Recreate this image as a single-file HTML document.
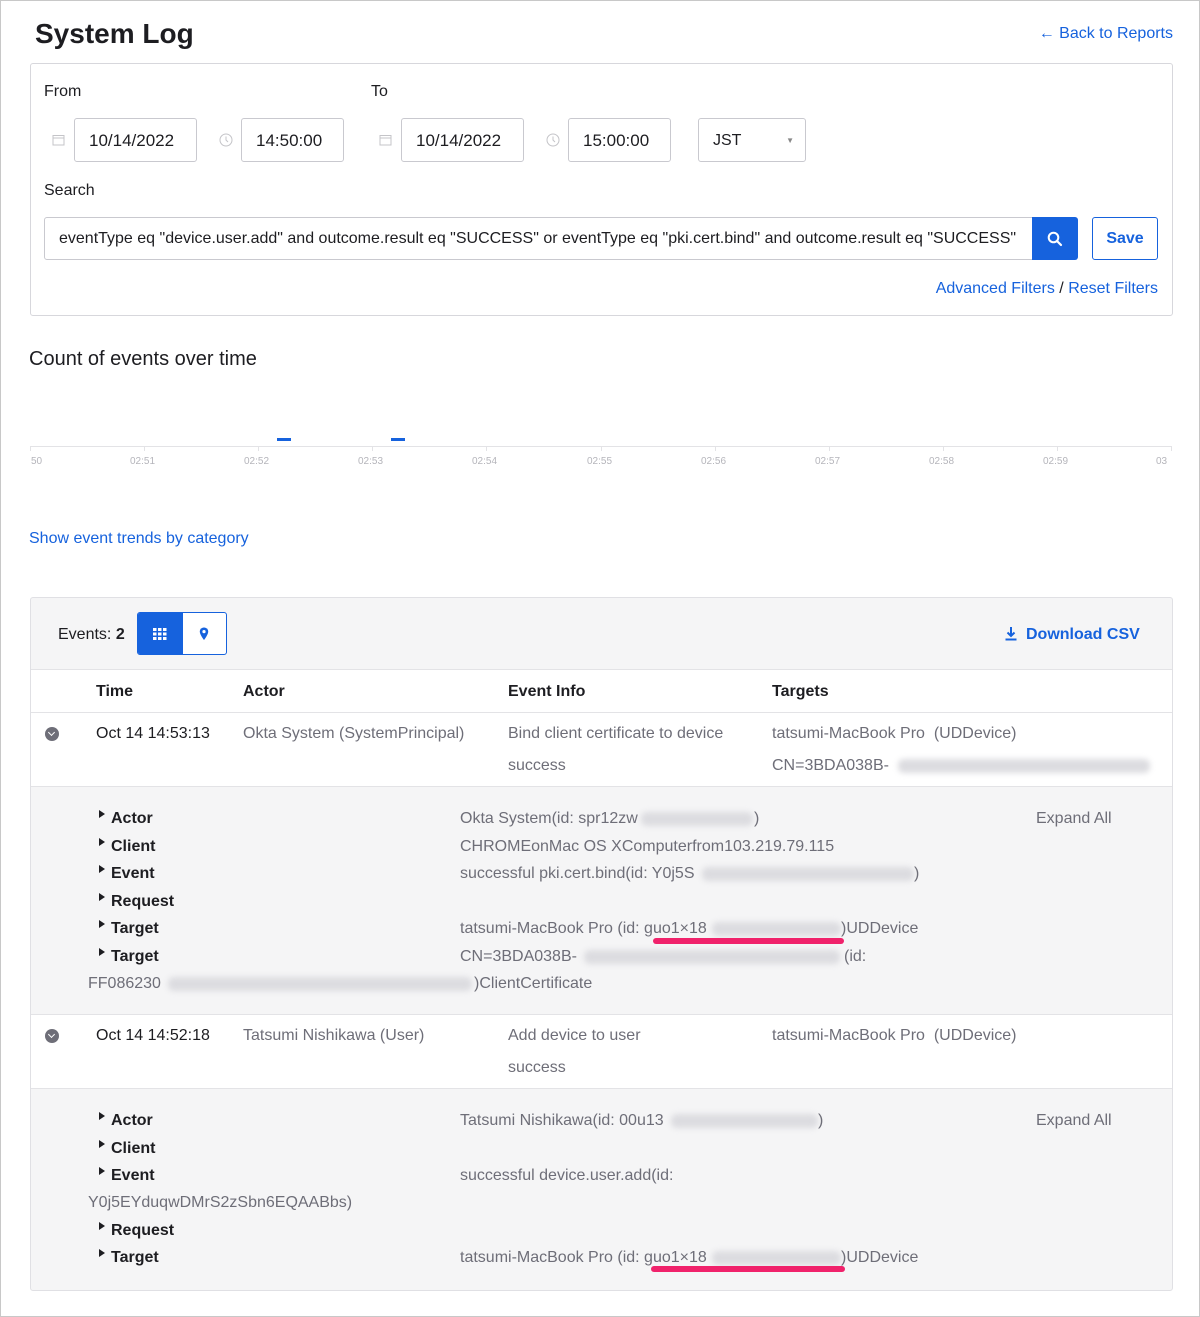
<!DOCTYPE html>
<html><head><meta charset="utf-8"><style>
*{box-sizing:border-box;margin:0;padding:0}
body{width:1200px;height:1317px;position:relative;background:#fff;font-family:"Liberation Sans",sans-serif;color:#1d1d21;overflow:hidden}
.frame{position:absolute;left:0;top:0;width:1200px;height:1317px;border:1px solid #c8c8c8;pointer-events:none}
.t{position:absolute;white-space:nowrap;line-height:18px;font-size:16px;margin-top:1px}
.g{color:#6e6e78}
.b{font-weight:bold}
.blue{color:#1662dd}
.box{position:absolute;border:1px solid #d7d7dc;border-radius:3px;background:#fff}
.inp{position:absolute;border:1px solid #c9c9cf;border-radius:3px;background:#fff;font-size:16px;line-height:43px;padding-left:14px}
.blur{position:absolute;background:#dcdce0;border-radius:6px;filter:blur(3px)}
.ul{position:absolute;height:6px;background:#f0226b;border-radius:3px}
.tri{position:absolute;width:0;height:0;border-top:4px solid transparent;border-bottom:4px solid transparent;border-left:6px solid #1d1d21;margin-top:1px}
.chev{position:absolute;width:14px;height:14px;border-radius:50%;background:#6e6e78;margin-top:1px}
.chev:after{content:"";position:absolute;left:4px;top:3px;width:4px;height:4px;border-right:1.6px solid #fff;border-bottom:1.6px solid #fff;transform:rotate(45deg)}
.ax{position:absolute;top:456px;font-size:10px;color:#b5b5bb;line-height:12px}
.tk{position:absolute;top:446px;width:1px;height:5px;background:#e3e3e6}
</style></head><body>
<div class="t b" style="left:35px;top:16px;font-size:28px;line-height:34px">System Log</div>
<div class="t blue" style="right:27px;top:24px;font-size:16px">← Back to Reports</div>

<div class="box" style="left:30px;top:63px;width:1143px;height:253px"></div>
<div class="t" style="left:44px;top:82px;font-size:16px">From</div>
<div class="t" style="left:371px;top:82px;font-size:16px">To</div>
<svg style="position:absolute;left:52px;top:133px" width="13" height="13"><rect x="1" y="2.5" width="11" height="9.5" fill="none" stroke="#c4c4c8"/><line x1="1" y1="5" x2="12" y2="5" stroke="#c4c4c8"/></svg>
<div class="inp" style="left:74px;top:118px;width:123px;height:44px;font-size:17px">10/14/2022</div>
<svg style="position:absolute;left:219px;top:133px" width="14" height="14"><circle cx="7" cy="7" r="6" fill="none" stroke="#c4c4c8"/><path d="M7 3.5V7l2 2" fill="none" stroke="#c4c4c8"/></svg>
<div class="inp" style="left:241px;top:118px;width:103px;height:44px;font-size:17px">14:50:00</div>
<svg style="position:absolute;left:379px;top:133px" width="13" height="13"><rect x="1" y="2.5" width="11" height="9.5" fill="none" stroke="#c4c4c8"/><line x1="1" y1="5" x2="12" y2="5" stroke="#c4c4c8"/></svg>
<div class="inp" style="left:401px;top:118px;width:123px;height:44px;font-size:17px">10/14/2022</div>
<svg style="position:absolute;left:546px;top:133px" width="14" height="14"><circle cx="7" cy="7" r="6" fill="none" stroke="#c4c4c8"/><path d="M7 3.5V7l2 2" fill="none" stroke="#c4c4c8"/></svg>
<div class="inp" style="left:568px;top:118px;width:103px;height:44px;font-size:17px">15:00:00</div>
<div class="inp" style="left:698px;top:118px;width:108px;height:44px">JST<span style="position:absolute;right:11px;top:0;font-size:8px;color:#888">▼</span></div>
<div class="t" style="left:44px;top:181px;font-size:16px">Search</div>
<div class="inp" style="left:44px;top:217px;width:989px;height:43px;overflow:hidden;font-size:16px;white-space:nowrap;border-radius:3px 0 0 3px;line-height:42px">eventType eq "device.user.add" and outcome.result eq "SUCCESS" or eventType eq "pki.cert.bind" and outcome.result eq "SUCCESS"</div>
<div style="position:absolute;left:1032px;top:217px;width:46px;height:43px;background:#1662dd;border-radius:0 3px 3px 0"><svg style="position:absolute;left:15px;top:14px" width="16" height="16"><circle cx="6.5" cy="6.5" r="4.8" fill="none" stroke="#fff" stroke-width="2"/><path d="M10 10l4 4" stroke="#fff" stroke-width="2.2" stroke-linecap="round"/></svg></div>
<div style="position:absolute;left:1092px;top:217px;width:66px;height:43px;border:1px solid #1662dd;border-radius:3px;color:#1662dd;font-weight:bold;font-size:16px;line-height:42px;text-align:center">Save</div>
<div class="t blue" style="right:42px;top:279px;font-size:16px">Advanced Filters <span style="color:#1d1d21">/</span> Reset Filters</div>

<div class="t" style="left:29px;top:346px;font-size:20px;line-height:24px">Count of events over time</div>
<div style="position:absolute;left:30px;top:446px;width:1142px;height:1px;background:#e3e3e6"></div>
<div style="position:absolute;left:277px;top:438px;width:14px;height:3px;background:#1662dd"></div>
<div style="position:absolute;left:391px;top:438px;width:14px;height:3px;background:#1662dd"></div>
<div class="tk" style="left:30px"></div><div class="tk" style="left:144px"></div><div class="tk" style="left:258px"></div><div class="tk" style="left:372px"></div><div class="tk" style="left:486px"></div><div class="tk" style="left:601px"></div><div class="tk" style="left:715px"></div><div class="tk" style="left:829px"></div><div class="tk" style="left:943px"></div><div class="tk" style="left:1057px"></div><div class="tk" style="left:1171px"></div>
<div class="ax" style="left:31px">50</div>
<div class="ax" style="left:130px">02:51</div><div class="ax" style="left:244px">02:52</div><div class="ax" style="left:358px">02:53</div><div class="ax" style="left:472px">02:54</div><div class="ax" style="left:587px">02:55</div><div class="ax" style="left:701px">02:56</div><div class="ax" style="left:815px">02:57</div><div class="ax" style="left:929px">02:58</div><div class="ax" style="left:1043px">02:59</div><div class="ax" style="left:1156px">03</div>
<div class="t blue" style="left:29px;top:529px;font-size:16px">Show event trends by category</div>

<div class="box" style="left:30px;top:597px;width:1143px;height:694px;background:#f5f5f6;border-color:#e0e0e4"></div>
<div class="t" style="left:58px;top:625px;font-size:16px">Events: <b>2</b></div>
<div style="position:absolute;left:137px;top:612px;width:90px;height:43px;border:1px solid #1662dd;border-radius:3px;background:#fff;overflow:hidden"><div style="position:absolute;left:0;top:0;width:45px;height:43px;background:#1662dd"></div>
<svg style="position:absolute;left:15px;top:15px" width="14" height="12"><g fill="#fff"><rect x="0" y="0" width="3.5" height="3"/><rect x="5" y="0" width="3.5" height="3"/><rect x="10" y="0" width="3.5" height="3"/><rect x="0" y="4.5" width="3.5" height="3"/><rect x="5" y="4.5" width="3.5" height="3"/><rect x="10" y="4.5" width="3.5" height="3"/><rect x="0" y="9" width="3.5" height="3"/><rect x="5" y="9" width="3.5" height="3"/><rect x="10" y="9" width="3.5" height="3"/></g></svg>
<svg style="position:absolute;left:61px;top:14px" width="10" height="14"><path d="M5 0.5C2.5 0.5 0.8 2.3 0.8 4.6 0.8 7.6 5 13 5 13s4.2-5.4 4.2-8.4C9.2 2.3 7.5 0.5 5 0.5z" fill="#1662dd"/><circle cx="5" cy="4.6" r="1.6" fill="#fff"/></svg></div>
<svg style="position:absolute;left:1004px;top:626px" width="14" height="15"><path d="M7 1v9M3.5 6.5 7 10l3.5-3.5M1.5 13.5h11" fill="none" stroke="#1662dd" stroke-width="2"/></svg>
<div class="t blue b" style="left:1026px;top:625px;font-size:16px">Download CSV</div>

<div style="position:absolute;left:31px;top:669px;width:1141px;height:118px;background:#fff;border-top:1px solid #e3e3e6;border-bottom:1px solid #e3e3e6"></div>
<div style="position:absolute;left:31px;top:712px;width:1141px;height:1px;background:#e3e3e6"></div>
<div class="t b" style="left:96px;top:682px">Time</div>
<div class="t b" style="left:243px;top:682px">Actor</div>
<div class="t b" style="left:508px;top:682px">Event Info</div>
<div class="t b" style="left:772px;top:682px">Targets</div>
<div class="chev" style="left:45px;top:726px"></div>
<div class="t" style="left:96px;top:724px">Oct 14 14:53:13</div>
<div class="t g" style="left:243px;top:724px">Okta System (SystemPrincipal)</div>
<div class="t g" style="left:508px;top:724px">Bind client certificate to device</div>
<div class="t g" style="left:508px;top:756px">success</div>
<div class="t g" style="left:772px;top:724px">tatsumi-MacBook Pro&nbsp; (UDDevice)</div>
<div class="t g" style="left:772px;top:756px">CN=3BDA038B-</div>
<div class="blur" style="left:898px;top:759px;width:252px;height:14px"></div>

<div class="tri" style="left:99px;top:809px"></div><div class="t b" style="left:111px;top:809px">Actor</div>
<div class="tri" style="left:99px;top:837px"></div><div class="t b" style="left:111px;top:837px">Client</div>
<div class="tri" style="left:99px;top:864px"></div><div class="t b" style="left:111px;top:864px">Event</div>
<div class="tri" style="left:99px;top:892px"></div><div class="t b" style="left:111px;top:892px">Request</div>
<div class="tri" style="left:99px;top:919px"></div><div class="t b" style="left:111px;top:919px">Target</div>
<div class="tri" style="left:99px;top:947px"></div><div class="t b" style="left:111px;top:947px">Target</div>
<div class="t g" style="left:88px;top:974px">FF086230</div><div class="blur" style="left:168px;top:977px;width:304px;height:14px"></div><div class="t g" style="left:474px;top:974px">)ClientCertificate</div>
<div class="t g" style="left:460px;top:809px">Okta System(id: spr12zw</div><div class="blur" style="left:641px;top:812px;width:112px;height:14px"></div><div class="t g" style="left:754px;top:809px">)</div>
<div class="t g" style="left:460px;top:837px">CHROMEonMac OS XComputerfrom103.219.79.115</div>
<div class="t g" style="left:460px;top:864px">successful pki.cert.bind(id: Y0j5S</div><div class="blur" style="left:702px;top:867px;width:212px;height:14px"></div><div class="t g" style="left:914px;top:864px">)</div>
<div class="t g" style="left:460px;top:919px">tatsumi-MacBook Pro (id: guo1×18</div><div class="blur" style="left:712px;top:922px;width:129px;height:14px"></div><div class="t g" style="left:841px;top:919px">)UDDevice</div>
<div class="ul" style="left:653px;top:938px;width:191px"></div>
<div class="t g" style="left:460px;top:947px">CN=3BDA038B-</div><div class="blur" style="left:584px;top:950px;width:256px;height:14px"></div><div class="t g" style="left:844px;top:947px">(id:</div>
<div class="t g" style="left:1036px;top:809px">Expand All</div>

<div style="position:absolute;left:31px;top:1014px;width:1141px;height:75px;background:#fff;border-top:1px solid #e3e3e6;border-bottom:1px solid #e3e3e6"></div>
<div class="chev" style="left:45px;top:1028px"></div>
<div class="t" style="left:96px;top:1026px">Oct 14 14:52:18</div>
<div class="t g" style="left:243px;top:1026px">Tatsumi Nishikawa (User)</div>
<div class="t g" style="left:508px;top:1026px">Add device to user</div>
<div class="t g" style="left:508px;top:1058px">success</div>
<div class="t g" style="left:772px;top:1026px">tatsumi-MacBook Pro&nbsp; (UDDevice)</div>

<div class="tri" style="left:99px;top:1111px"></div><div class="t b" style="left:111px;top:1111px">Actor</div>
<div class="tri" style="left:99px;top:1139px"></div><div class="t b" style="left:111px;top:1139px">Client</div>
<div class="tri" style="left:99px;top:1166px"></div><div class="t b" style="left:111px;top:1166px">Event</div>
<div class="t g" style="left:88px;top:1193px">Y0j5EYduqwDMrS2zSbn6EQAABbs)</div>
<div class="tri" style="left:99px;top:1221px"></div><div class="t b" style="left:111px;top:1221px">Request</div>
<div class="tri" style="left:99px;top:1248px"></div><div class="t b" style="left:111px;top:1248px">Target</div>
<div class="t g" style="left:460px;top:1111px">Tatsumi Nishikawa(id: 00u13</div><div class="blur" style="left:671px;top:1114px;width:147px;height:14px"></div><div class="t g" style="left:818px;top:1111px">)</div>
<div class="t g" style="left:460px;top:1166px">successful device.user.add(id:</div>
<div class="t g" style="left:460px;top:1248px">tatsumi-MacBook Pro (id: guo1×18</div><div class="blur" style="left:712px;top:1251px;width:129px;height:14px"></div><div class="t g" style="left:841px;top:1248px">)UDDevice</div>
<div class="ul" style="left:651px;top:1266px;width:194px"></div>
<div class="t g" style="left:1036px;top:1111px">Expand All</div>
<div class="frame"></div>
</body></html>
